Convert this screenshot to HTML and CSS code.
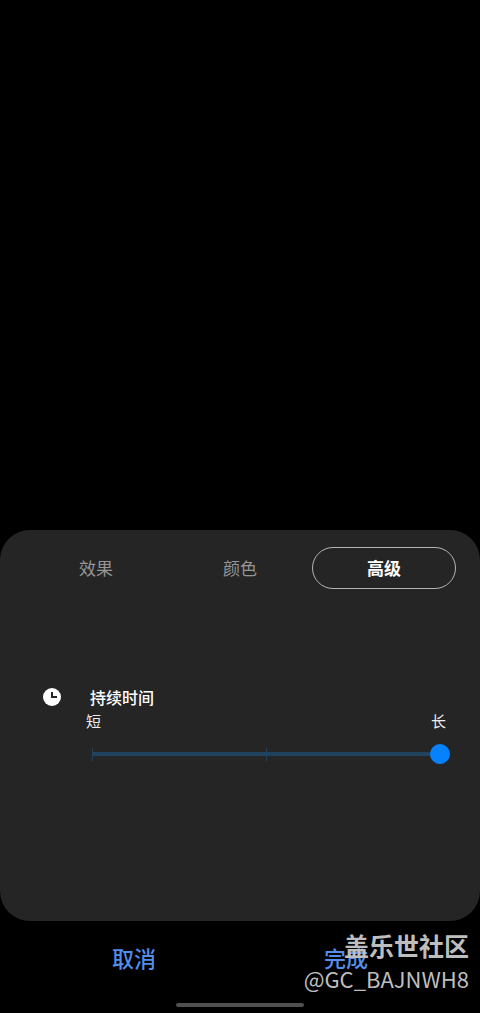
FILE: index.html
```html
<!DOCTYPE html>
<html lang="zh-CN">
<head>
<meta charset="utf-8">
<meta name="viewport" content="width=device-width, initial-scale=1">
<title>高级</title>
<link rel="stylesheet" href="styles.css">
</head>
<body>
<main class="screen">
  <section class="panel">
    <nav class="tabs">
      <button class="tab" type="button">效果</button>
      <button class="tab" type="button">颜色</button>
      <button class="tab tab-active" type="button">高级</button>
    </nav>
    <div class="setting">
      <svg class="clock" viewBox="0 0 18 18" aria-hidden="true">
        <circle cx="9" cy="9" r="9" fill="#fff"/>
        <path d="M9 4v5h5" fill="none" stroke="#252525" stroke-width="2"/>
      </svg>
      <div class="setting-body">
        <label class="setting-title" for="duration">持续时间</label>
        <div class="ends"><span>短</span><span>长</span></div>
        <div class="slider">
          <input class="range" id="duration" type="range" min="0" max="2" step="1" value="2">
        </div>
      </div>
    </div>
  </section>
  <footer class="footer">
    <div class="actions">
      <button class="action" type="button">取消</button>
      <button class="action" type="button">完成</button>
    </div>
    <div class="home-bar"></div>
    <div class="watermark">
      <div class="community">盖乐世社区</div>
      <div class="author">@GC_BAJNWH8</div>
    </div>
  </footer>
</main>
</body>
</html>
```
FILE: styles.css
```css
* {
  box-sizing: border-box;
}

body {
  margin: 0;
  background: #000;
  color: #fff;
  font-family: "Noto Sans CJK SC", sans-serif;
}

button {
  margin: 0;
  padding: 0;
  border: 0;
  background: none;
  font-family: inherit;
}

.screen {
  min-height: 100vh;
  display: flex;
  flex-direction: column;
  justify-content: flex-end;
}

.panel {
  padding: 17px 24px 154px;
  border-radius: 30px;
  background: #252525;
}

.tabs {
  display: grid;
  grid-template-columns: repeat(3, 1fr);
}

.tab {
  height: 42px;
  border-radius: 21px;
  color: #969696;
  font-size: 17px;
  line-height: 24px;
}

.tab-active {
  border: 1px solid #b4b4b4;
  color: #fff;
  font-weight: 700;
}

.setting {
  display: flex;
  gap: 21px;
  margin-top: 96px;
  padding-left: 19px;
}

.clock {
  flex: none;
  width: 18px;
  height: 18px;
  margin-top: 3px;
}

.setting-body {
  flex: 1;
  padding-right: 6px;
}

.setting-title {
  display: block;
  padding-left: 8px;
  font-size: 16px;
  font-weight: 500;
  line-height: 24px;
}

.ends {
  display: flex;
  justify-content: space-between;
  padding: 0 4px;
  font-size: 15px;
  line-height: 24px;
  color: #eee;
}

.slider {
  margin-top: 8px;
  padding: 3px 10px;
  background:
    linear-gradient(#20425f, #20425f) 10px center / 1px 13px no-repeat,
    linear-gradient(#20425f, #20425f) center center / 1px 13px no-repeat;
}

.range {
  appearance: none;
  display: block;
  width: calc(100% + 20px);
  height: 20px;
  margin: 0 -10px;
  background: linear-gradient(#20425f, #20425f) center / calc(100% - 20px) 4px no-repeat;
}

.range::-webkit-slider-thumb {
  appearance: none;
  width: 20px;
  height: 20px;
  border-radius: 50%;
  background: #0682ff;
}

.footer {
  position: relative;
  padding: 20px 0 6px;
}

.actions {
  display: grid;
  grid-template-columns: 1fr 1fr;
  padding: 0 28px;
}

.action {
  color: #528eea;
  font-size: 22px;
  font-weight: 500;
  line-height: 32px;
}

.home-bar {
  width: 128px;
  height: 4px;
  margin: 30px auto 0;
  border-radius: 2px;
  background: #505050;
}

.watermark {
  position: absolute;
  top: 8px;
  right: 11px;
  color: #bebebe;
  text-align: right;
}

.community {
  font-size: 25px;
  font-weight: 700;
  line-height: 32px;
}

.author {
  font-size: 22px;
  font-weight: 400;
  line-height: 34px;
}
```
